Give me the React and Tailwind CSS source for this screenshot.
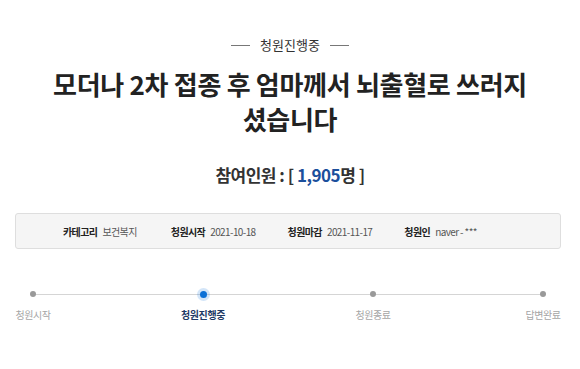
export default function App() {
  const font = { fontFamily: '"Noto Sans CJK KR", "Noto Sans", sans-serif' };
  const steps = [
    { label: "청원시작", active: false },
    { label: "청원진행중", active: true },
    { label: "청원종료", active: false },
    { label: "답변완료", active: false },
  ];
  return (
    <div className="w-[580px] h-[369px] bg-white overflow-hidden flex flex-col items-center" style={font}>
      <div className="mt-[35px] h-[20px] flex items-center gap-[10px]">
        <span className="w-[19px] h-px bg-[#777]" />
        <span className="text-[13px] leading-[20px] text-[#333]">청원진행중</span>
        <span className="w-[19px] h-px bg-[#777]" />
      </div>
      <h1 className="mt-[11px] w-[500px] text-center text-[26px] leading-[35px] font-bold text-[#222] tracking-[-0.3px] break-keep">
        모더나 2차 접종 후 엄마께서 뇌출혈로 쓰러지 셨습니다
      </h1>
      <div className="mt-[27px] h-[24px] text-[17px] leading-[24px] font-bold text-[#333] tracking-[-0.5px]">
        참여인원 : [ <span className="text-[#1b4f9c]">1,905</span>명 ]
      </div>
      <div className="mt-[26px] w-[546px] h-[36px] ml-[-4px] border border-[#dedede] rounded-[3px] bg-[#f5f5f5] flex items-center pl-[47px] text-[10px] tracking-[-0.6px]">
        <div className="flex items-center gap-[5px] mr-[34px]">
          <span className="font-bold text-[#222]">카테고리</span>
          <span className="text-[#555]">보건복지</span>
        </div>
        <div className="flex items-center gap-[5px] mr-[32px]">
          <span className="font-bold text-[#222]">청원시작</span>
          <span className="text-[#555]">2021-10-18</span>
        </div>
        <div className="flex items-center gap-[5px] mr-[32px]">
          <span className="font-bold text-[#222]">청원마감</span>
          <span className="text-[#555]">2021-11-17</span>
        </div>
        <div className="flex items-center gap-[5px]">
          <span className="font-bold text-[#222]">청원인</span>
          <span className="text-[#555]">naver - ***</span>
        </div>
      </div>
      <div className="mt-[39px] w-[510px] ml-[-4px] relative">
        <div className="absolute left-0 right-0 top-[6px] h-px bg-[#d5d5d5]" />
        <div className="relative flex justify-between">
          {steps.map((s) => (
            <div key={s.label} className="w-0 flex flex-col items-center">
              <div className="h-[12px] flex items-center justify-center">
                {s.active ? (
                  <span className="w-[7px] h-[7px] rounded-full bg-[#0a6fd6] shadow-[0_0_0_3px_rgba(10,111,214,0.18)]" />
                ) : (
                  <span className="w-[6px] h-[6px] rounded-full bg-[#999]" />
                )}
              </div>
              <span
                className={
                  "mt-[8px] whitespace-nowrap text-[10px] leading-[14px] tracking-[-0.4px] " +
                  (s.active ? "font-bold text-[#1f3a66]" : "text-[#a5a5a5]")
                }
              >
                {s.label}
              </span>
            </div>
          ))}
        </div>
      </div>
    </div>
  );
}
